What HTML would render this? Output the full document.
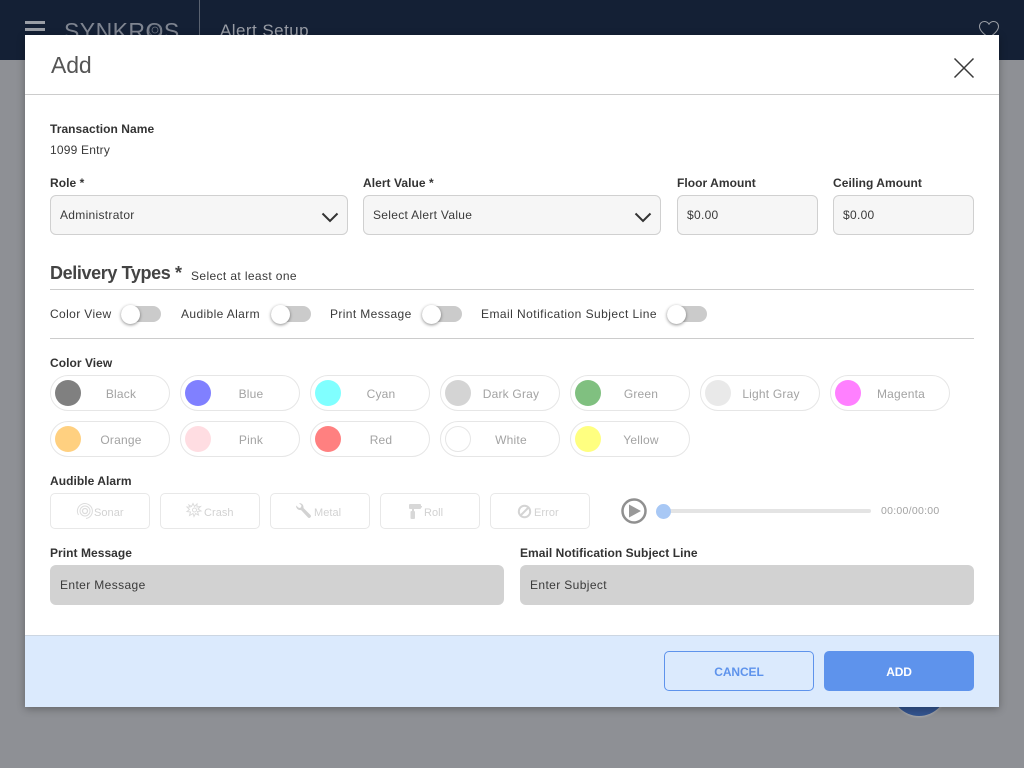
<!DOCTYPE html>
<html><head><meta charset="utf-8"><style>
html,body{margin:0;padding:0}
body{width:1024px;height:768px;position:relative;overflow:hidden;background:#8e9095;font-family:"Liberation Sans",sans-serif;color:#333}
.a{position:absolute;white-space:nowrap}
.lb{font-size:12px;font-weight:bold;line-height:14px;color:#333;letter-spacing:.05px}
.tx{font-size:12px;line-height:14px;color:#3a3a3a;letter-spacing:.38px}
.f{box-sizing:border-box;height:40px;border:1px solid #d0d0d0;border-radius:6px;background:#f6f6f6;font-size:12px;line-height:38px;padding-left:9px;color:#3a3a3a;letter-spacing:.3px}
.g{box-sizing:border-box;height:40px;border-radius:6px;background:#d2d2d2;font-size:12px;line-height:40px;padding-left:10px;color:#3a3a3a;letter-spacing:.38px}
.hr{position:absolute;height:1px;background:#ccc}
.tr{position:absolute;width:40px;height:16px;border-radius:8px;background:#cbcbcb}
.kn{position:absolute;left:-.5px;top:-1.500px;width:19px;height:19px;border-radius:50%;background:#fff;box-shadow:0 1px 3px rgba(0,0,0,.45)}
.p{position:absolute;box-sizing:border-box;width:120px;height:36px;border:1px solid #e6e6e6;border-radius:18px;background:#fff}
.p i{position:absolute;left:4px;top:4px;width:26px;height:26px;border-radius:50%;box-sizing:border-box}
.p span{position:absolute;left:22px;right:0;top:0;text-align:center;font-size:12px;line-height:37px;color:#a3a3a3;letter-spacing:.2px}
.s{position:absolute;box-sizing:border-box;width:100px;height:36px;border:1px solid #e8e8e8;border-radius:5px;background:#fff;font-size:11px;line-height:38px;color:#d2d2d2;letter-spacing:.05px}
.s svg{position:absolute;left:0;top:0}
.s span{position:absolute}
</style></head><body>
<div class="a" style="left:0;top:0;width:1024px;height:60px;background:#142035"></div>
<div class="a" style="left:25px;top:21px;width:20px;height:2.500px;background:#9a9ea6"></div>
<div class="a" style="left:25px;top:28px;width:20px;height:2.500px;background:#9a9ea6"></div>
<div class="a" style="left:64px;top:16px;font-size:23px;line-height:30px;color:#7f8591;letter-spacing:.45px">SYNKROS</div>
<svg class="a" style="left:144px;top:19px" width="22" height="22" viewBox="0 0 22 22" fill="none" stroke="#6c7380" stroke-width=".8"><circle cx="11" cy="11" r="6"/><circle cx="11" cy="11" r="3"/></svg>
<div class="a" style="left:199px;top:0;width:1px;height:35px;background:#5a6270"></div>
<div class="a" style="left:220px;top:20px;font-size:17px;line-height:22px;color:#989ca5;letter-spacing:.45px">Alert Setup</div>
<svg class="a" style="left:978px;top:20px" width="22" height="20" viewBox="0 0 22 20"><path d="M11 18C6 14 1.500 10.500 1.500 6.500C1.500 3.500 3.800 1.500 6.300 1.500C8.300 1.500 10 2.500 11 4.200C12 2.500 13.700 1.500 15.700 1.500C18.200 1.500 20.500 3.500 20.500 6.500C20.500 10.500 16 14 11 18Z" fill="none" stroke="#9a9ea6" stroke-width="1"/></svg>
<div class="a" style="left:891px;top:680px;width:56px;height:36px;border-radius:0 0 28px 28px;background:#33548f;box-shadow:0 1px 2px rgba(255,255,255,.25)"></div>

<div class="a" style="left:25px;top:35px;width:974px;height:672px;background:#fff;box-shadow:0 2px 8px rgba(0,0,0,.3)"></div>
<div class="a" style="left:51px;top:51px;font-size:23px;line-height:28px;color:#555;letter-spacing:-.1px">Add</div>
<svg class="a" style="left:952px;top:56px" width="24" height="24" viewBox="0 0 24 24"><path d="M2.500 2.500L21.500 21.500M21.500 2.500L2.500 21.500" stroke="#3a3a3a" stroke-width="1.500" fill="none"/></svg>
<div class="hr" style="left:25px;top:94px;width:974px"></div>

<div class="a lb" style="left:50px;top:122px">Transaction Name</div>
<div class="a tx" style="left:50px;top:143px;letter-spacing:.2px">1099 Entry</div>

<div class="a lb" style="left:50px;top:176px">Role *</div>
<div class="a lb" style="left:363px;top:176px">Alert Value *</div>
<div class="a lb" style="left:677px;top:176px">Floor Amount</div>
<div class="a lb" style="left:833px;top:176px">Ceiling Amount</div>
<div class="a f" style="left:50px;top:195px;width:298px">Administrator</div>
<div class="a f" style="left:363px;top:195px;width:298px">Select Alert Value</div>
<div class="a f" style="left:677px;top:195px;width:141px">$0.00</div>
<div class="a f" style="left:833px;top:195px;width:141px">$0.00</div>
<svg class="a" style="left:320px;top:211px" width="20" height="14" viewBox="0 0 20 14"><path d="M2.500 2.500L10 10L17.500 2.500" fill="none" stroke="#333" stroke-width="2"/></svg>
<svg class="a" style="left:633px;top:211px" width="20" height="14" viewBox="0 0 20 14"><path d="M2.500 2.500L10 10L17.500 2.500" fill="none" stroke="#333" stroke-width="2"/></svg>

<div class="a" style="left:50px;top:262px;font-size:18px;line-height:22px;font-weight:bold;color:#444;letter-spacing:-.38px">Delivery Types *</div>
<div class="a tx" style="left:191px;top:269px">Select at least one</div>
<div class="hr" style="left:50px;top:289px;width:924px"></div>

<div class="a tx" style="left:50px;top:307px">Color View</div>
<div class="tr" style="left:121px;top:306px"><div class="kn"></div></div>
<div class="a tx" style="left:181px;top:307px">Audible Alarm</div>
<div class="tr" style="left:271px;top:306px"><div class="kn"></div></div>
<div class="a tx" style="left:330px;top:307px">Print Message</div>
<div class="tr" style="left:422px;top:306px"><div class="kn"></div></div>
<div class="a tx" style="left:481px;top:307px;letter-spacing:.45px">Email Notification Subject Line</div>
<div class="tr" style="left:667px;top:306px"><div class="kn"></div></div>
<div class="hr" style="left:50px;top:338px;width:924px"></div>

<div class="a lb" style="left:50px;top:356px">Color View</div>
<div class="p" style="left:50px;top:375px"><i style="background:#808080"></i><span>Black</span></div>
<div class="p" style="left:180px;top:375px"><i style="background:#8080ff"></i><span>Blue</span></div>
<div class="p" style="left:310px;top:375px"><i style="background:#80ffff"></i><span>Cyan</span></div>
<div class="p" style="left:440px;top:375px"><i style="background:#d4d4d4"></i><span>Dark Gray</span></div>
<div class="p" style="left:570px;top:375px"><i style="background:#80c080"></i><span>Green</span></div>
<div class="p" style="left:700px;top:375px"><i style="background:#e9e9e9"></i><span>Light Gray</span></div>
<div class="p" style="left:830px;top:375px"><i style="background:#ff80ff"></i><span>Magenta</span></div>
<div class="p" style="left:50px;top:421px"><i style="background:#ffd080"></i><span>Orange</span></div>
<div class="p" style="left:180px;top:421px"><i style="background:#ffdde2"></i><span>Pink</span></div>
<div class="p" style="left:310px;top:421px"><i style="background:#ff8080"></i><span>Red</span></div>
<div class="p" style="left:440px;top:421px"><i style="background:#fff;border:1px solid #e6e6e6"></i><span>White</span></div>
<div class="p" style="left:570px;top:421px"><i style="background:#ffff80"></i><span>Yellow</span></div>

<div class="a lb" style="left:50px;top:474px">Audible Alarm</div>
<div class="s" style="left:50px;top:493px"><svg width="100" height="36" fill="none" stroke="#dcdcdc"><circle cx="34" cy="17" r="2.500" stroke-width="1.300"/><circle cx="34" cy="17" r="5"/><path d="M27.500 21A7.500 7.500 0 1 1 35 24.500"/></svg><span style="left:43px">Sonar</span></div>
<div class="s" style="left:160px;top:493px"><svg width="100" height="36" fill="none" stroke="#dcdcdc" stroke-width="1"><path d="M28 11l2.500 1.500 1.500-3 1.500 3 2.500-2.500 0 3 3.500-.5-2.500 2.500 3 2-3.500 .5 1 3.500-3-1.500-1.500 3-1-3-3.500 2 1-3.500-3.500-.5 2.500-2-2.500-2.500 3 0z"/><circle cx="33.500" cy="16" r="2"/></svg><span style="left:43px">Crash</span></div>
<div class="s" style="left:270px;top:493px"><svg width="100" height="36" fill="#d2d2d2"><path d="M31 10a4.300 4.300 0 0 1 4.500 5l7 7c1.500 1.500-1 4-2.500 2.500l-7-7.500a4.300 4.300 0 0 1-5-4.500l3 2.500 2-.5.500-2z" transform="translate(-3,-1)"/></svg><span style="left:43px">Metal</span></div>
<div class="s" style="left:380px;top:493px"><svg width="100" height="36" fill="#d8d8d8"><rect x="28" y="10" width="12" height="5" rx="1"/><rect x="38" y="12" width="3" height="1.500"/><rect x="31" y="15" width="2" height="2"/><rect x="29.500" y="17" width="4.500" height="8" rx="1"/></svg><span style="left:43px">Roll</span></div>
<div class="s" style="left:490px;top:493px"><svg width="100" height="36" fill="none" stroke="#d4d4d4" stroke-width="2"><circle cx="33.500" cy="17.500" r="5.700"/><path d="M29.500 21.500L37.500 13.500"/></svg><span style="left:43px">Error</span></div>

<svg class="a" style="left:620px;top:497px" width="28" height="28" viewBox="0 0 28 28"><circle cx="14" cy="14" r="11.500" fill="none" stroke="#909090" stroke-width="2.500"/><path d="M9 7.500L21 14L9 20.500Z" fill="#999"/></svg>
<div class="a" style="left:663px;top:509px;width:208px;height:4px;border-radius:2px;background:#e4e4e4"></div>
<div class="a" style="left:656px;top:504px;width:15px;height:15px;border-radius:50%;background:#a8c8f5"></div>
<div class="a" style="left:881px;top:504px;font-size:10.500px;line-height:14px;color:#a3a3a3;letter-spacing:.28px">00:00/00:00</div>

<div class="a lb" style="left:50px;top:546px">Print Message</div>
<div class="a lb" style="left:520px;top:546px">Email Notification Subject Line</div>
<div class="a g" style="left:50px;top:565px;width:454px">Enter Message</div>
<div class="a g" style="left:520px;top:565px;width:454px">Enter Subject</div>

<div class="a" style="left:25px;top:635px;width:974px;height:72px;background:#dbeafd;border-top:1px solid #ccd6e2;box-sizing:border-box"></div>
<div class="a" style="left:664px;top:651px;width:150px;height:40px;box-sizing:border-box;border:1px solid #5e93ec;border-radius:5px;text-align:center;font-size:12px;font-weight:bold;line-height:41px;color:#5e93ec;letter-spacing:-.1px">CANCEL</div>
<div class="a" style="left:824px;top:651px;width:150px;height:40px;border-radius:5px;background:#5e93ec;text-align:center;font-size:12px;font-weight:bold;line-height:43px;color:#fff;letter-spacing:-.2px">ADD</div>
</body></html>
